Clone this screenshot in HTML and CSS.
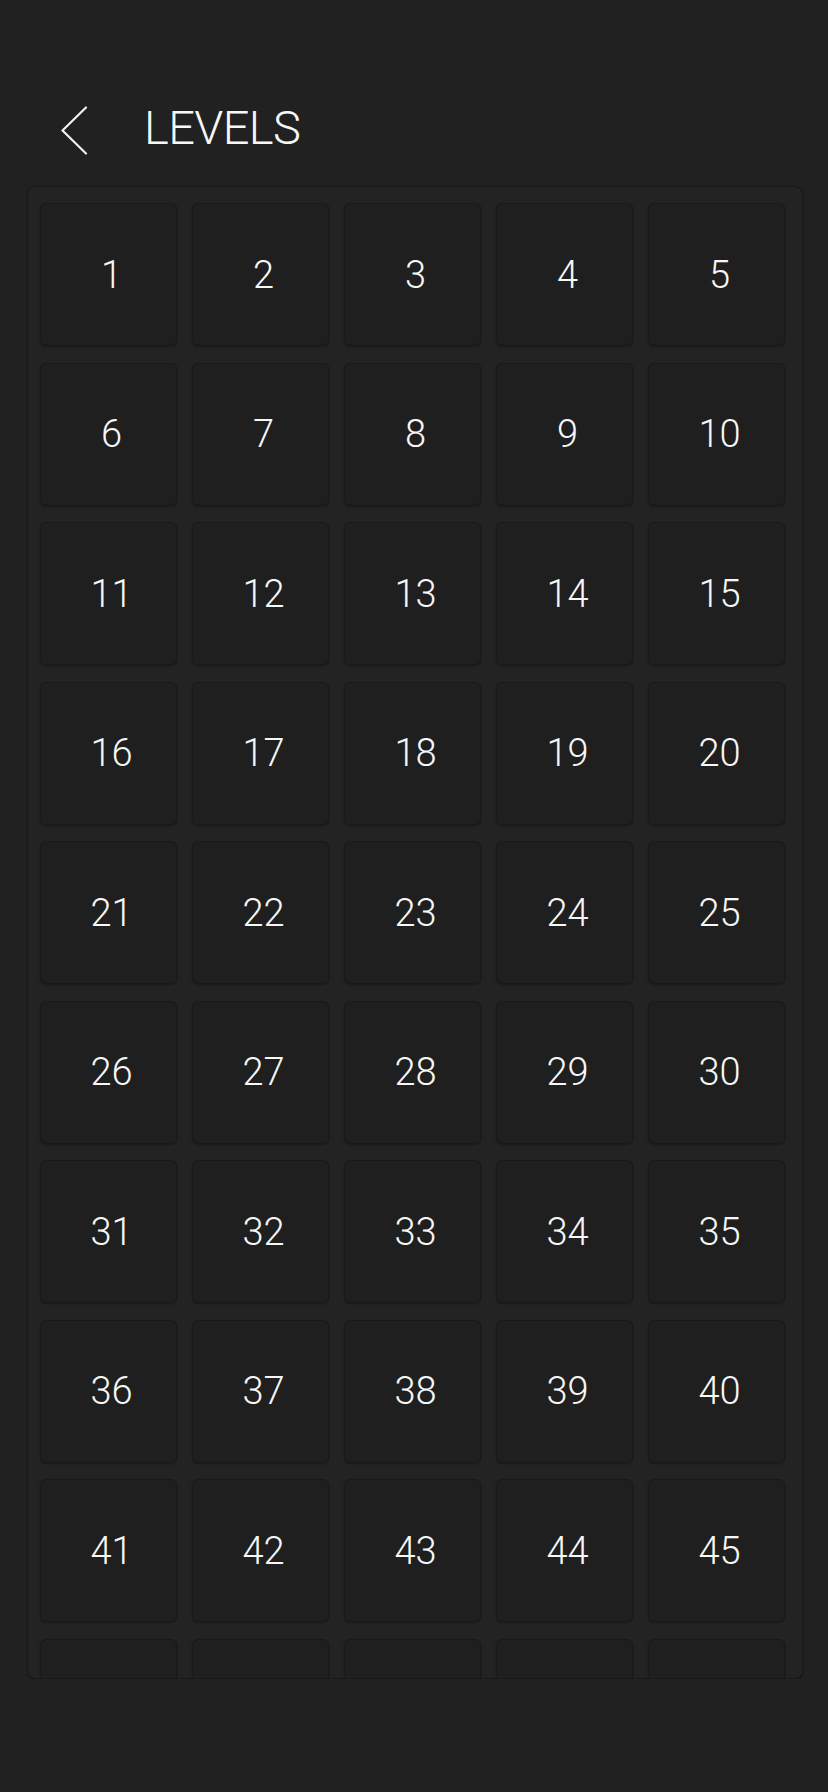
FILE: index.html
```html
<!DOCTYPE html>
<html lang="en">
<head>
  <meta charset="UTF-8">
  <meta name="viewport" content="width=device-width, initial-scale=1.0">
  <title>Levels</title>
  <link rel="stylesheet" href="styles.css">
</head>
<body>
  <div class="header">
    <button class="back-btn" aria-label="Back">
      <svg width="28" height="49" viewBox="0 0 28 49">
        <path d="M26 1.5 L2.5 24.5 L26 47.5" fill="none" stroke="#f2f2f2" stroke-width="2.2" stroke-linecap="round" stroke-linejoin="round"/>
      </svg>
    </button>
    <h1 class="title">LEVELS</h1>
  </div>

  <div class="levels-panel">
    <div class="levels-grid">
      <div class="level">1</div>
      <div class="level">2</div>
      <div class="level">3</div>
      <div class="level">4</div>
      <div class="level">5</div>
      <div class="level">6</div>
      <div class="level">7</div>
      <div class="level">8</div>
      <div class="level">9</div>
      <div class="level">10</div>
      <div class="level">11</div>
      <div class="level">12</div>
      <div class="level">13</div>
      <div class="level">14</div>
      <div class="level">15</div>
      <div class="level">16</div>
      <div class="level">17</div>
      <div class="level">18</div>
      <div class="level">19</div>
      <div class="level">20</div>
      <div class="level">21</div>
      <div class="level">22</div>
      <div class="level">23</div>
      <div class="level">24</div>
      <div class="level">25</div>
      <div class="level">26</div>
      <div class="level">27</div>
      <div class="level">28</div>
      <div class="level">29</div>
      <div class="level">30</div>
      <div class="level">31</div>
      <div class="level">32</div>
      <div class="level">33</div>
      <div class="level">34</div>
      <div class="level">35</div>
      <div class="level">36</div>
      <div class="level">37</div>
      <div class="level">38</div>
      <div class="level">39</div>
      <div class="level">40</div>
      <div class="level">41</div>
      <div class="level">42</div>
      <div class="level">43</div>
      <div class="level">44</div>
      <div class="level">45</div>
      <div class="level">46</div>
      <div class="level">47</div>
      <div class="level">48</div>
      <div class="level">49</div>
      <div class="level">50</div>
    </div>
  </div>
</body>
</html>
```

FILE: styles.css
```css
:root {
  --page-bg: #212121;
  --panel-bg: #232323;
  --tile-bg: #1f1f1f;
  --edge: #191919;
  --text-color: #f7f7f7;
}

body {
  margin: 0;
  background-color: var(--page-bg);
  font-family: Roboto, 'Liberation Sans', sans-serif;
  color: var(--text-color);
}

.header {
  display: flex;
  align-items: center;
  height: 96px;
  padding: 82px 0 0 60px;
  box-sizing: content-box;
}

.back-btn {
  display: flex;
  padding: 0;
  background: none;
  border: none;
  cursor: pointer;
}

.title {
  margin: 0 0 5px 56px;
  font-size: 47px;
  font-weight: 300;
  letter-spacing: -0.6px;
}

.levels-panel {
  margin: 8px 0 0 27px;
  width: 776px;
  height: 1493px;
  box-sizing: border-box;
  background-color: var(--panel-bg);
  border: 1px solid var(--edge);
  border-radius: 8px;
  box-shadow: 0 1px 2px rgba(0,0,0,0.35);
  overflow: hidden;
  padding: 16px 16px 0 12px;
}

.levels-grid {
  display: grid;
  grid-template-columns: repeat(5, 137px);
  grid-auto-rows: 143px;
  column-gap: 15px;
  row-gap: 16.5px;
}

.level {
  display: flex;
  align-items: center;
  justify-content: center;
  padding-left: 6px;
  background-color: var(--tile-bg);
  border: 1px solid var(--edge);
  border-radius: 6px;
  box-shadow: 0 1px 2px rgba(0,0,0,0.3);
  font-size: 38px;
  font-weight: 300;
}
```
